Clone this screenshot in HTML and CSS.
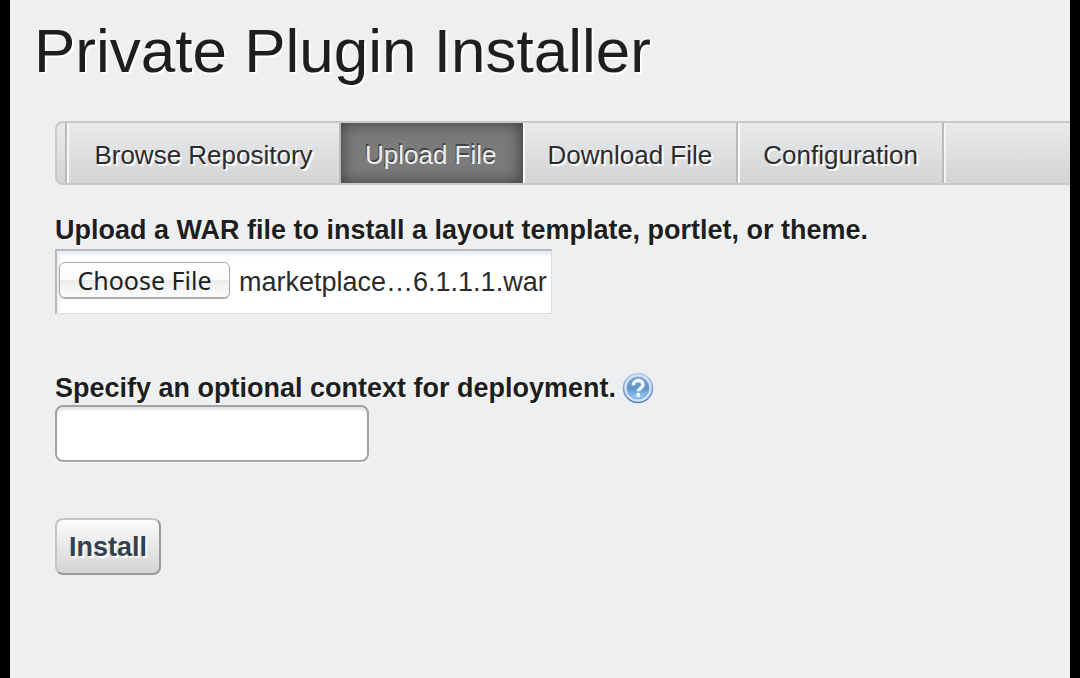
FILE: index.html
```html
<!DOCTYPE html>
<html lang="en">
<head>
<meta charset="utf-8">
<title>Private Plugin Installer</title>
<link rel="stylesheet" href="styles.css">
</head>
<body class="page">
<h1 class="title">Private Plugin Installer</h1>
<nav class="tabs">
  <a class="tab tab-wide" href="#browse">Browse Repository</a>
  <a class="tab tab-active" href="#upload" aria-current="page">Upload File</a>
  <a class="tab" href="#download">Download File</a>
  <a class="tab" href="#configuration">Configuration</a>
</nav>
<form class="form">
  <div class="field">
    <label class="label" for="war-file">Upload a WAR file to install a layout template, portlet, or theme.</label>
    <div class="file">
      <button class="choose" type="button" id="war-file">Choose File</button>
      <output class="file-name" for="war-file">marketplace…6.1.1.1.war</output>
    </div>
  </div>
  <div class="field">
    <div class="label-row">
      <label class="label" for="context">Specify an optional context for deployment.</label>
      <button class="help" type="button" aria-label="Help">
        <svg class="help-icon" viewBox="0 0 32 32" aria-hidden="true">
          <defs>
            <linearGradient id="ball" x1="0" y1="0" x2="0" y2="1">
              <stop offset="0" stop-color="#7aa5d6"/>
              <stop offset="0.5" stop-color="#5b92d0"/>
              <stop offset="1" stop-color="#a5d2f5"/>
            </linearGradient>
            <linearGradient id="rim" x1="0" y1="0" x2="0" y2="1">
              <stop offset="0" stop-color="#b4cbe6"/>
              <stop offset="1" stop-color="#4f80bd"/>
            </linearGradient>
          </defs>
          <circle cx="16" cy="16" r="14.5" fill="#d3e3f5" stroke="url(#rim)" stroke-width="1.6"/>
          <circle cx="16" cy="16" r="11" fill="url(#ball)" stroke="#7ba5d6" stroke-width="1"/>
          <path d="M11.4 13.4c0-6.6 9.6-6.2 9.6-.6 0 3.6-4.6 3.2-4.6 6.4" fill="none" stroke="#f2f8ff" stroke-width="3.6"/>
          <circle cx="16.3" cy="22.8" r="2.1" fill="#f2f8ff"/>
        </svg>
      </button>
    </div>
    <input class="text" type="text" id="context">
  </div>
  <button class="install" type="submit">Install</button>
</form>
</body>
</html>
```
FILE: styles.css
```css
* {
  box-sizing: border-box;
}

.page {
  margin: 0;
  min-height: 100vh;
  padding-top: 15px;
  border: solid #000;
  border-width: 0 10px;
  background: #eeeff1;
  color: #1d1e20;
  font: 27px/32px "Liberation Sans", Arial, sans-serif;
  text-shadow: 1px 1px 0 #fff;
}

.title {
  margin: 0 0 34px;
  padding-left: 24px;
  font-size: 62px;
  font-weight: 400;
  line-height: 72px;
  text-shadow: 2px 2px 0 #fff;
}

.tabs {
  display: flex;
  height: 64px;
  margin-left: 45px;
  padding-left: 8px;
  border: 2px solid #c8c9cb;
  border-right: 0;
  border-radius: 8px 0 0 8px;
  background: linear-gradient(#e9eaec, #d3d4d6);
}

.tab {
  display: flex;
  align-items: center;
  justify-content: center;
  padding: 4px 24px 0 25px;
  border-right: 2px solid #b9babc;
  box-shadow: inset 2px 0 0 #f7f8f9, 2px 0 0 #f3f4f5;
  color: #2b2c2e;
  font-size: 26px;
  text-decoration: none;
  text-shadow: 2px 2px 0 #fff;
}

.tab-wide {
  min-width: 276px;
  border-left: 2px solid #b9babc;
}

.tab-active {
  padding-left: 24px;
  border-right-color: #555;
  background: #7b7b7b;
  box-shadow: inset 0 0 16px #3c3c3c;
  color: #eee;
  text-shadow: -1px -2px 0 #444;
}

.form {
  display: flex;
  flex-direction: column;
  align-items: flex-start;
  padding: 29px 20px 20px 45px;
}

.field {
  margin-bottom: 56px;
}

.label {
  display: block;
  font-weight: 700;
}

.file {
  display: flex;
  align-items: center;
  gap: 9px;
  width: 497px;
  height: 65px;
  margin-top: 3px;
  padding: 0 0 4px 2px;
  border: solid;
  border-width: 2px 1px 1px 2px;
  border-color: #b9babc #dcdddf #dcdddf #b9babc;
  background: #fff;
  box-shadow: inset 2px 4px 3px #e9eef1;
  color: #2b2b2b;
  text-shadow: none;
}

.file-name {
  padding-top: 4px;
}

.choose {
  width: 171px;
  height: 36px;
  padding: 0;
  border: 1px solid #a9aaac;
  border-radius: 6px;
  background: linear-gradient(#fff 0%, #fafafa 49%, #ececec 50%, #fcfcfc 100%);
  box-shadow: 0 1px 1px #aaa;
  color: #1d1e20;
  font: 25px/32px "Noto Sans", sans-serif;
}

.label-row {
  display: flex;
  align-items: center;
  gap: 6px;
  padding-top: 2px;
}

.help {
  width: 32px;
  height: 32px;
  padding: 0;
  border: 0;
  background: none;
}

.help-icon {
  display: block;
}

.text {
  display: block;
  width: 314px;
  height: 57px;
  margin-top: 1px;
  padding: 0 12px;
  border: 2px solid #a2a3a5;
  border-radius: 8px;
  background: #fff;
  box-shadow: inset 0 3px 3px #e4e4e4, 0 1px 1px #fff;
  font: inherit;
}

.install {
  height: 57px;
  padding: 0 12px;
  border: 2px solid;
  border-color: #c4c5c7 #98999b #98999b #c4c5c7;
  border-radius: 8px;
  background: linear-gradient(#fbfbfb, #d4d4d4);
  color: #34404f;
  font: inherit;
  font-weight: 700;
  text-shadow: 2px 2px 0 #fff;
}
```
